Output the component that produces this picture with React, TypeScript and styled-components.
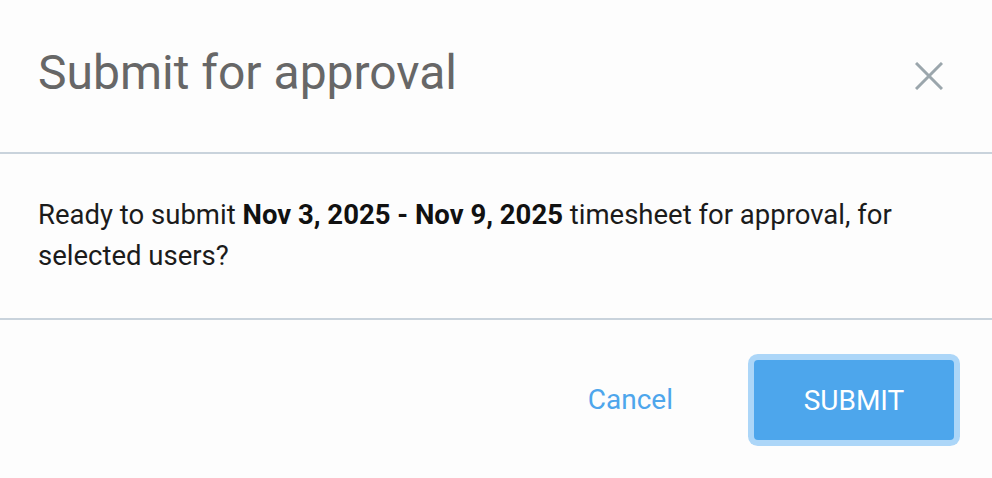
import React from "react";
import styled, { createGlobalStyle } from "styled-components";

const Global = createGlobalStyle`
  html, body { margin: 0; padding: 0; background: #fdfdfd; }
  body { font-family: Roboto, "Liberation Sans", sans-serif; }
`;

const Dialog = styled.div`
  width: 992px;
  height: 478px;
  display: flex;
  flex-direction: column;
  background: #fdfdfd;
`;

const Header = styled.div`
  height: 154px;
  box-sizing: border-box;
  padding: 0 49px 0 38px;
  display: flex;
  align-items: center;
  justify-content: space-between;
  border-bottom: 2px solid #c9d3dc;
`;

const Title = styled.h1`
  margin: 0 0 8px;
  font-size: 48px;
  line-height: normal;
  font-weight: 400;
  color: #676767;
`;

const CloseButton = styled.button`
  background: none;
  border: none;
  padding: 0;
  width: 28px;
  height: 28px;
  display: flex;
  align-items: center;
  justify-content: center;
  cursor: pointer;
`;

const Body = styled.div`
  height: 166px;
  box-sizing: border-box;
  padding: 40px 38px 0;
  border-bottom: 2px solid #c9d3dc;
`;

const Message = styled.p`
  margin: 0;
  font-size: 27.5px;
  line-height: 41px;
  color: #1b1b1b;
  max-width: 900px;

  b {
    font-weight: 700;
    color: #111111;
  }
`;

const Footer = styled.div`
  flex: 1;
  display: flex;
  align-items: center;
  justify-content: flex-end;
  gap: 81px;
  padding: 0 38px 0 0;
`;

const TextButton = styled.button`
  background: none;
  border: none;
  padding: 0;
  font-family: inherit;
  font-size: 28px;
  color: #4ea6ec;
  cursor: pointer;
`;

const PrimaryButton = styled.button`
  width: 200px;
  height: 80px;
  margin-top: 2px;
  border: none;
  border-radius: 4px;
  padding: 0;
  background: #4da6ec;
  box-shadow: 0 0 0 6px #acd6f8;
  cursor: pointer;
  font-family: Roboto, "Liberation Sans", sans-serif;
  font-size: 28px;
  color: #ffffff;
`;

export default function App() {
  return (
    <>
      <Global />
      <Dialog>
        <Header>
          <Title>Submit for approval</Title>
          <CloseButton aria-label="Close">
            <svg width="28" height="28" viewBox="0 0 28 28">
              <path d="M1 1 L27 27 M27 1 L1 27" stroke="#9ba6ac" strokeWidth="3" />
            </svg>
          </CloseButton>
        </Header>
        <Body>
          <Message>
            Ready to submit <b>Nov 3, 2025 - Nov 9, 2025</b> timesheet for approval, for selected users?
          </Message>
        </Body>
        <Footer>
          <TextButton>Cancel</TextButton>
          <PrimaryButton>SUBMIT</PrimaryButton>
        </Footer>
      </Dialog>
    </>
  );
}
